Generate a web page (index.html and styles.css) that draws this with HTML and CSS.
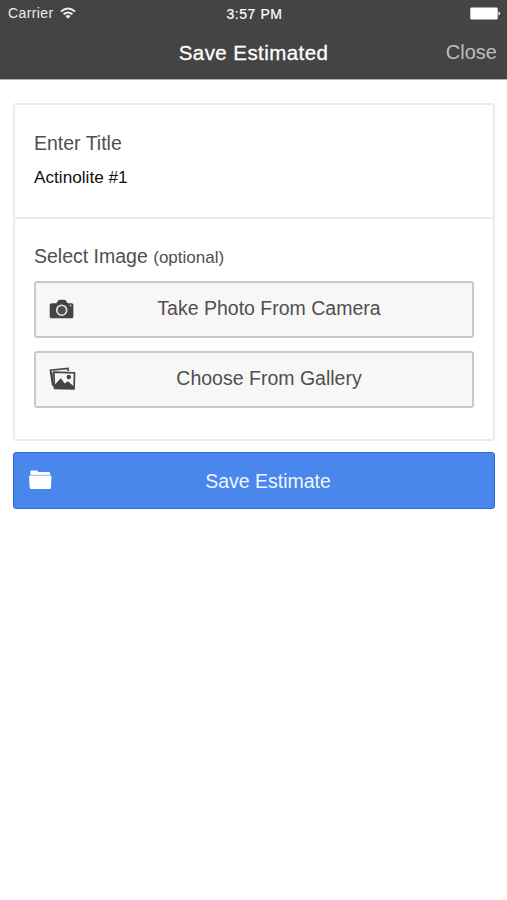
FILE: index.html
```html
<!DOCTYPE html>
<html lang="en">
<head>
<meta charset="utf-8">
<title>Save Estimated</title>
<link rel="stylesheet" href="styles.css">
</head>
<body>
<header class="header">
  <div class="status">
    <div class="carrier">
      <span>Carrier</span>
      <svg class="wifi" width="16" height="12" viewBox="0 0 16 12" fill="none" stroke="currentColor" stroke-width="2">
        <path d="M1 4.5Q8-1.5 15 4.5M3.6 7.3Q8 3.6 12.4 7.3"/>
        <path d="M8 11.7 5.4 9Q8 7 10.6 9Z" fill="currentColor" stroke="none"/>
      </svg>
    </div>
    <span class="time">3:57 PM</span>
    <svg class="battery" width="31" height="13" viewBox="0 0 31 13" fill="#fff">
      <rect x="0.3" y="0.5" width="27.4" height="12" rx="1.3"/>
      <path d="M28.4 4.5Q30.3 5 30.3 6.5T28.4 8.5Z" opacity=".85"/>
    </svg>
  </div>
  <div class="navbar">
    <h1 class="title">Save Estimated</h1>
    <a class="close">Close</a>
  </div>
</header>
<main class="content">
  <div class="card">
    <section class="field">
      <label class="label">Enter Title</label>
      <div class="value">Actinolite #1</div>
    </section>
    <section class="images">
      <div class="label">Select Image <small class="hint">(optional)</small></div>
      <button class="button">
        <svg class="icon" width="26" height="22" viewBox="0 0 26 22">
          <path fill="#444" d="M3 4.2H7.2L9.2 1.5Q9.8.8 10.8.8H15.2Q16.2.8 16.8 1.5L18.8 4.2H22.5Q24.4 4.2 24.4 6.1V17.4Q24.4 19.3 22.5 19.3H2.6Q.7 19.3.7 17.4V6.1Q.7 4.2 3 4.2Z"/>
          <circle cx="12.7" cy="11.2" r="5" fill="#505050" stroke="#e8e8e8" stroke-width="1.6"/>
          <circle cx="21.6" cy="6.5" r="0.9" fill="#bbb"/>
        </svg>
        <span>Take Photo From Camera</span>
      </button>
      <button class="button">
        <svg class="icon gallery" width="27" height="24" viewBox="0 0 27 24">
          <path fill="none" stroke="#444" stroke-width="1.7" d="M3.8 18.5 1.4 3.2 19 1.4 19.4 4"/>
          <path fill="#444" d="M1.2 4 3.8 19.5H5L3.4 5Z"/>
          <path fill="#f7f7f7" stroke="#444" stroke-width="1.7" stroke-linejoin="round" d="M4.8 5.2 25.5 5.8 25.1 22 5.5 21.4Z"/>
          <path fill="#444" d="M5.5 21.5V18L11.8 11.2 15.8 16.5 18.8 14.3 25 19.5V22Z"/>
          <circle cx="19.8" cy="10" r="2.2" fill="#444"/>
        </svg>
        <span>Choose From Gallery</span>
      </button>
    </section>
  </div>
  <button class="button primary">
    <svg class="icon" width="23" height="20" viewBox="0 0 23 20" fill="#fff">
      <path d="M1.4 5V1.8Q1.4.4 2.8.4H7.4Q8.5.4 9 1.4L9.4 2.1H19.8Q21.2 2.1 21.2 3.5V5Z"/>
      <path d="M1.2 5.6H21.3Q22.6 5.6 22.5 6.9L22 17.6Q21.9 18.9 20.7 18.9H2Q.8 18.9.7 17.6L.1 6.9Q0 5.6 1.2 5.6Z"/>
      <path d="M1.5 5.3H21" stroke="#a9c6f7" stroke-width=".7"/>
    </svg>
    <span>Save Estimate</span>
  </button>
</main>
</body>
</html>
```

FILE: styles.css
```css
* { box-sizing: border-box; }
body {
  margin: 0;
  background: #fff;
  color: #4f4f4f;
  font-family: "Liberation Sans", Arial, sans-serif;
  font-size: 19.5px;
}
.header {
  height: 80px;
  background: #444;
  border-bottom: 1px solid #b0b0b0;
  color: #fff;
}
.status {
  display: grid;
  grid-template-columns: 1fr auto 1fr;
  align-items: center;
  height: 27px;
  padding: 0 6px 0 8px;
  font-size: 14px;
  line-height: 29px;
}
.carrier {
  display: flex;
  align-items: center;
  gap: 6px;
  height: 27px;
  color: #ececec;
  letter-spacing: .4px;
}
.wifi { margin-bottom: 2px; }
.time {
  height: 27px;
  letter-spacing: .55px;
  -webkit-text-stroke: .2px #fff;
}
.battery { justify-self: end; }
.navbar {
  display: grid;
  grid-template-columns: 1fr auto 1fr;
  align-items: center;
  height: 51px;
  padding: 0 10px;
}
.title {
  grid-column: 2;
  margin: 0;
  font-size: 20.5px;
  font-weight: normal;
  letter-spacing: .43px;
  -webkit-text-stroke: .3px #fff;
}
.close {
  justify-self: end;
  color: #bdbdbd;
  font-size: 20px;
}
.content { padding: 23px 12px 0 13px; }
.card {
  height: 338px;
  border: 2px solid #ebebeb;
  border-radius: 3px;
}
.field {
  height: 114px;
  padding: 26px 19px 0;
  border-bottom: 2px solid #ebebeb;
}
.label {
  display: block;
  line-height: 24px;
}
.value {
  margin-top: 10px;
  color: #111;
  font-size: 17.2px;
  line-height: 24px;
}
.images { padding: 25px 19px 0; }
.hint { font-size: 17px; }
.button {
  position: relative;
  display: flex;
  align-items: center;
  justify-content: center;
  width: 100%;
  height: 57px;
  margin: 13px 0 0;
  padding: 0 0 2px 30px;
  border: 2px solid #c8c8c8;
  border-radius: 3px;
  background: #f7f7f7;
  color: #4f4f4f;
  font: inherit;
}
.label + .button { margin-top: 11px; }
.icon {
  position: absolute;
  left: 13px;
  top: 16px;
}
.gallery { top: 14px; }
.primary {
  margin-top: 11px;
  padding: 1px 0 0 28px;
  border: 1px solid #2f6bd6;
  background: #4a87ec;
  color: #eef5ff;
}
.primary .icon { left: 15px; top: 17px; }
```
